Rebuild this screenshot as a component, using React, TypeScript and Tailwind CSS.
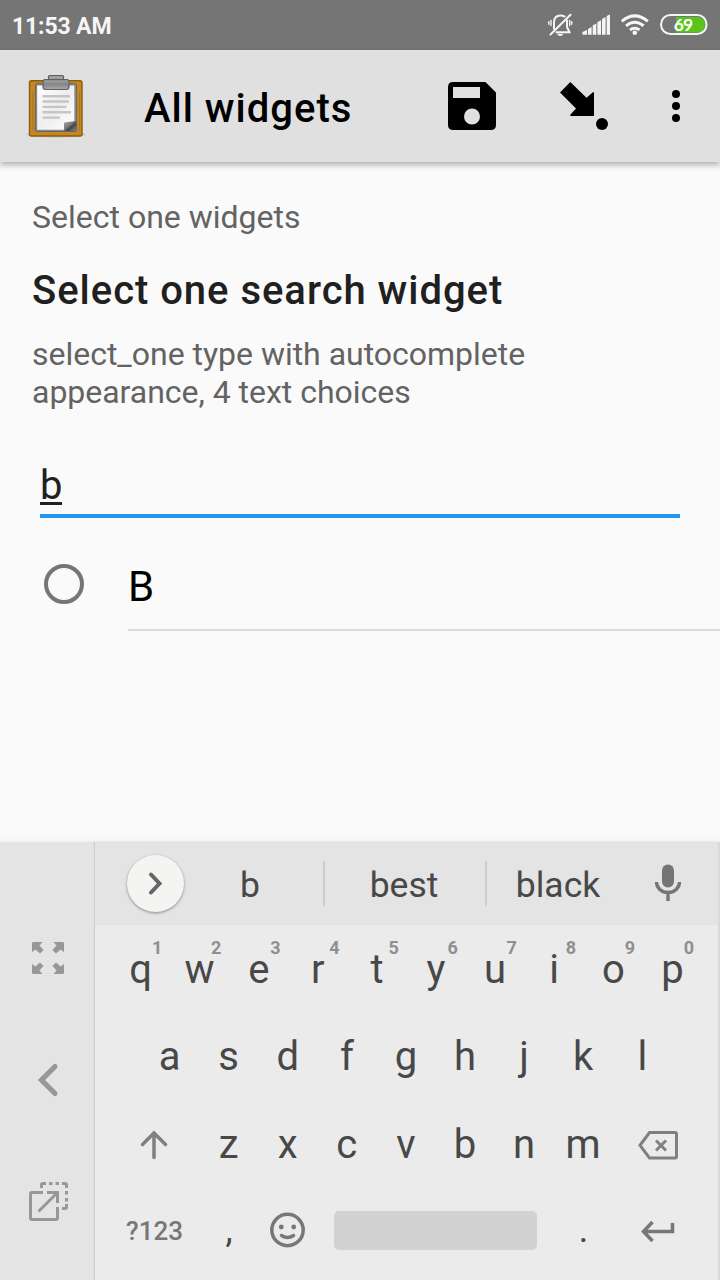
import React from "react";

function StatusBar() {
  return (
    <header className="flex h-[50px] shrink-0 items-center bg-[#757575] pl-[12px] text-[#f5f5f5]">
      <span className="mt-[4px] whitespace-nowrap text-[23px] leading-[28px] font-bold tracking-[-0.15px]">11:53 AM</span>
      <svg className="ml-auto h-[50px] w-[180px]" viewBox="540 0 180 50" fill="none">
        <g stroke="#f5f5f5" strokeWidth="2" strokeLinecap="round">
          <path d="M554 29V22.5Q554 15.500 560.500 15.500Q562.500 15.500 564.500 16.500" />
          <path d="M567 20.500V27L569.500 32.200H556.500" />
          <path d="M550.500 34.500L570.500 14.800" />
          <path d="M551 20.500V25.500M548.800 21.800V24.300M569.700 20.500V25.500M571.700 21.800V24.300" strokeWidth="1.400" />
        </g>
        <path d="M557 33.800H563.500Q562.500 36 560.300 36Q558 36 557 33.800Z" fill="#f5f5f5" />
        <g fill="#f5f5f5">
          <path d="M582.500 34.700V32L587 30V34.700Z" />
          <path d="M588 34.700V29L591.600 27V34.700Z" />
          <path d="M592.700 34.700V25.500L596.300 23.500V34.700Z" />
          <path d="M597.400 34.700V22.300L601 20.300V34.700Z" />
          <path d="M602 34.700V19L605.600 17V34.700Z" />
          <path d="M606.700 34.700V16L610 14.500V34.700Z" />
        </g>
        <g stroke="#f5f5f5" strokeWidth="3">
          <path d="M621.800 21.300Q634.700 10.500 647.800 21.300" />
          <path d="M626 25.800Q634.700 18.800 643.600 25.800" />
          <path d="M630 30Q634.700 26.500 639.500 30" />
        </g>
        <circle cx="634.800" cy="32.700" r="2.300" fill="#f5f5f5" />
        <path d="M676 17H697.500A7.500 7.500 0 0 1 697.500 32.500H676Z" fill="#58c41c" />
        <rect x="661" y="15" width="45.600" height="19" rx="9.500" stroke="#f5f5f5" strokeWidth="2" />
        <text x="683" y="30.600" textAnchor="middle" fill="#fff" fontSize="17.5" fontWeight="700" fontFamily="Lato, sans-serif" letterSpacing="-1">69</text>
      </svg>
    </header>
  );
}

function Clipboard() {
  return (
    <svg className="h-[66px] w-[60px] shrink-0" viewBox="26 72 60 66">
      <defs>
        <linearGradient id="metal" x1="0" y1="0" x2="0" y2="1">
          <stop offset="0" stopColor="#aaa" /><stop offset=".45" stopColor="#858585" /><stop offset="1" stopColor="#aaa" />
        </linearGradient>
        <linearGradient id="paper" x1="0" y1="0" x2="1" y2="1">
          <stop offset="0" stopColor="#fff" /><stop offset=".5" stopColor="#eee" /><stop offset="1" stopColor="#fff" />
        </linearGradient>
        <linearGradient id="fold" x1="0" y1="0" x2="1" y2="1">
          <stop offset="0" stopColor="#aaa" /><stop offset=".45" stopColor="#777" /><stop offset=".6" stopColor="#444" /><stop offset="1" stopColor="#888" />
        </linearGradient>
      </defs>
      <ellipse cx="56" cy="133.500" rx="30" ry="3" fill="#c9c9c9" />
      <rect x="29.500" y="79.700" width="52.500" height="55.300" rx="2" fill="#c68620" stroke="#8c5c10" strokeWidth="1.400" />
      <path d="M33 90V129M79.500 90V130" stroke="#ab731b" />
      <rect x="35.500" y="82.800" width="41" height="47.700" rx="1" fill="#8c8c8c" stroke="#656565" />
      <path d="M37.200 84.500H74.300V121L64 128.800H37.200Z" fill="url(#paper)" />
      <path d="M42.500 95.300H70M42.500 100.500H69M42.500 105.900H66.500M42.500 111.300H71M42.500 116.600H60" stroke="#c5c5c5" strokeWidth="2.400" />
      <path d="M64 121.500L76 120V130H64Z" fill="url(#fold)" />
      <path d="M48.500 79V75.500Q48.500 74.500 49.500 74.500H62.500Q63.500 74.500 63.500 75.500V79" fill="#a0a0a0" stroke="#606063" strokeWidth="1.200" />
      <path d="M45 78.600H67Q69 78.600 69 80.500V85.500Q69 88.500 66.500 88.500H45.500Q43 88.500 43 85.500V80.500Q43 78.600 45 78.600Z" fill="url(#metal)" stroke="#606063" strokeWidth="1.200" />
    </svg>
  );
}

function AppBar() {
  return (
    <div className="relative z-10 flex h-[112px] shrink-0 items-center bg-[#e0e0e0] pl-[26px] shadow-[0_3px_6px_rgba(0,0,0,0.3)]">
      <Clipboard />
      <h1 className="mt-[6px] ml-[58px] text-[40px] leading-[48px] font-medium tracking-[1px] whitespace-nowrap text-black">All widgets</h1>
      <svg className="ml-auto h-[112px] w-[290px] shrink-0" viewBox="430 50 290 112" fill="black">
        <path fillRule="evenodd" d="M453 82H485.500L496 92.500V125Q496 130 491 130H453Q448 130 448 125V87Q448 82 453 82ZM453 87V98H480V87ZM472 108.500A8 8 0 1 0 472 124.500A8 8 0 1 0 472 108.500Z" />
        <path d="M570.300 82L586.500 97.800L593.200 92Q594 92 594 93V116H570.500Q570 115.500 570.500 114.500L576 108.500L560 92.500Z" />
        <circle cx="602" cy="124" r="6" />
        <circle cx="676" cy="94" r="4" /><circle cx="676" cy="106" r="4" /><circle cx="676" cy="118" r="4" />
      </svg>
    </div>
  );
}

function Question() {
  return (
    <main className="flex flex-1 flex-col bg-[#fafafa] pl-[32px]">
      <p className="mt-[36px] text-[32px] leading-[38px] whitespace-nowrap text-[#636363]">Select one widgets</p>
      <h2 className="mt-[31px] text-[40px] leading-[48px] font-medium tracking-[0.97px] whitespace-nowrap text-[#202020]">Select one search widget</h2>
      <p className="mt-[20px] text-[32px] leading-[38px] tracking-[-0.02px] whitespace-nowrap text-[#636363]">select_one type with autocomplete<br />appearance, 4 text choices</p>
      <div className="mt-[51px] mr-[40px] ml-[8px] flex h-[56px] items-start border-b-4 border-[#2196f3]">
        <span className="flex h-[43px] w-[22px] items-end border-b-3 border-[#202020] text-[40px] leading-[32px] text-[#202020]">b</span>
      </div>
      <div className="flex h-[113px] items-start pt-[46px] pl-[12px]">
        <span className="size-[40px] shrink-0 rounded-full border-4 border-[#757575]" />
        <div className="ml-[44px] flex h-[67px] flex-1 items-start border-b-2 border-[#dcdcdc]">
          <span className="-mt-[1px] text-[42px] leading-[48px] text-black">B</span>
        </div>
      </div>
    </main>
  );
}

function SideRail() {
  return (
    <svg className="h-[438px] w-[95px] shrink-0 bg-[#e4e4e4]" viewBox="0 842 95 438" fill="none">
      <g fill="#979797">
        <path d="M33 942H42.500L39.500 945.500L43.500 950L40 953.500L35.500 949.500L32 952V943Z" />
        <path d="M63 942H53.500L56.500 945.500L52.500 950L56 953.500L60.500 949.500L64 952V943Z" />
        <path d="M33 974H42.500L39.500 970.500L43.500 966L40 962.500L35.500 966.500L32 964V973Z" />
        <path d="M63 974H53.500L56.500 970.500L52.500 966L56 962.500L60.500 966.500L64 964V973Z" />
      </g>
      <path d="M55 1066.500L41.500 1080L55 1093.500" stroke="#979797" strokeWidth="5.200" strokeLinecap="round" />
      <g stroke="#979797" strokeWidth="3">
        <path d="M43 1192.500H32Q30.500 1192.500 30.500 1194V1218Q30.500 1219.500 32 1219.500H56Q57.500 1219.500 57.500 1218V1207" />
        <path d="M47 1192.500H57.500V1203M57.500 1192.500L38.500 1211.500" />
        <path d="M41.500 1188V1185Q41.500 1183.500 43 1183.500H46M49 1183.500H52.500M55.500 1183.500H59M62 1183.500H65Q66.500 1183.500 66.500 1185V1188M66.500 1191V1194.500M66.500 1198V1201.500M66.500 1204V1207Q66.500 1208.500 65 1208.500H62" />
      </g>
    </svg>
  );
}

function Key({ label, hint }: { label: string; hint?: string }) {
  return (
    <div className="relative flex h-[87.5px] w-[59.1px] shrink-0 items-center justify-center">
      <span className="mt-[2px] text-[40px] leading-[48px] text-[#484848]">{label}</span>
      {hint && <span className="absolute top-[13px] left-[41px] text-[18px] leading-[20px] font-bold text-[#8f8f8f]">{hint}</span>}
    </div>
  );
}

function Suggestions() {
  return (
    <div className="flex h-[83px] items-center bg-[#e4e4e4] pl-[32px] text-[35.5px] leading-[42px] text-[#484848]">
      <span className="flex size-[57px] shrink-0 items-center justify-center rounded-full bg-[#f4f4f2] shadow-[0_1px_3px_rgba(0,0,0,0.4)]">
        <svg className="size-[28px]" viewBox="0 0 28 28" fill="none"><path d="M9 4.500L17.500 13.500L9 22.500" stroke="#666" strokeWidth="4" strokeLinecap="round" /></svg>
      </span>
      <span className="mt-[3px] w-[132px] text-center">b</span>
      <span className="ml-[7px] h-[45px] w-[2px] bg-[#cdcdcd]" />
      <span className="mt-[3px] w-[158px] text-center">best</span>
      <span className="ml-[2px] h-[45px] w-[2px] bg-[#cdcdcd]" />
      <span className="mt-[3px] w-[142px] text-center">black</span>
      <svg className="ml-[24px] h-[40px] w-[30px]" viewBox="653 864 30 40" fill="none">
        <rect x="662" y="864.500" width="12" height="23" rx="6" fill="#757575" />
        <path d="M656.500 882A11.500 10.500 0 0 0 679.500 882M668 892V901" stroke="#757575" strokeWidth="3.400" />
      </svg>
    </div>
  );
}

function Keyboard() {
  return (
    <section className="flex h-[438px] shrink-0 bg-[#ebebeb] shadow-[0_-1px_8px_rgba(0,0,0,0.06)]">
      <SideRail />
      <div className="flex w-[625px] flex-col border-r-2 border-r-[#dadada] shadow-[-1px_0_1px_#cfcfcf]">
        <Suggestions />
        <div className="flex pl-[16px]">
          {"qwertyuiop".split("").map((k, i) => <Key key={k} label={k} hint={String((i + 1) % 10)} />)}
        </div>
        <div className="flex pl-[45px]">
          {"asdfghjkl".split("").map((k) => <Key key={k} label={k} />)}
        </div>
        <div className="flex items-center pl-[16px]">
          <svg className="mt-[2px] h-[30px] w-[88px] shrink-0" viewBox="0 0 88 30" fill="none" stroke="#808080" strokeWidth="3.500" strokeLinecap="round">
            <path d="M43 27.500V4M31.500 14.500L43 3L54.500 14.500" />
          </svg>
          {"zxcvbnm".split("").map((k) => <Key key={k} label={k} />)}
          <svg className="mt-[2px] ml-[24px] h-[32px] w-[42px]" viewBox="637 1129 42 32" fill="none" stroke="#808080" strokeWidth="3">
            <path d="M649.500 1132.500H675Q676.500 1132.500 676.500 1134V1156.500Q676.500 1158 675 1158H649.500L640 1145.300ZM656 1140.500L666 1150.500M666 1140.500L656 1150.500" />
          </svg>
        </div>
        <div className="-mt-[1px] flex h-[87.5px] items-center pl-[31px] text-[#484848]">
          <span className="mt-[2px] w-[60px] text-[26px] leading-[32px] font-medium whitespace-nowrap text-[#777]">?123</span>
          <span className="ml-[21px] w-[37px] pl-[7px] text-center text-[36px] leading-[48px]">,</span>
          <svg className="ml-[25px] size-[36px] shrink-0" viewBox="0 0 36 36" fill="none" stroke="#777" strokeWidth="3.500">
            <circle cx="18.500" cy="18" r="15.700" />
            <g stroke="none" fill="#777"><circle cx="12.300" cy="15" r="2.400" /><circle cx="24.700" cy="15" r="2.400" /></g>
            <path d="M12.500 23.500Q18.500 27.500 24.500 23.500" strokeLinecap="round" />
          </svg>
          <div className="ml-[29px] h-[39px] w-[203px] shrink-0 rounded-[5px] bg-[#d2d2d2]" />
          <span className="w-[93px] text-center text-[36px] leading-[48px]">.</span>
          <svg className="mt-[2px] ml-[9px] h-[24px] w-[38px]" viewBox="639 1219 38 24" fill="none" stroke="#777" strokeWidth="3.500">
            <path d="M672.500 1223V1231.500H644M652.500 1222L643.500 1231.500L652.500 1241" />
          </svg>
        </div>
      </div>
    </section>
  );
}

export default function App() {
  return (
    <div className="flex h-[1280px] w-[720px] flex-col overflow-hidden bg-[#fafafa] font-['Roboto',sans-serif]">
      <StatusBar />
      <AppBar />
      <Question />
      <Keyboard />
    </div>
  );
}
